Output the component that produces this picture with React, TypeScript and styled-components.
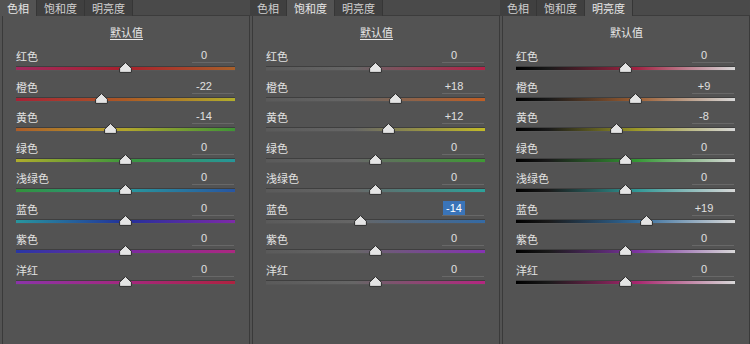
import React from 'react';
import styled, { createGlobalStyle } from 'styled-components';

const GlobalStyle = createGlobalStyle`
  html, body {
    margin: 0;
    padding: 0;
    background: #535353;
  }
  body {
    font-family: "Noto Sans CJK SC", "Noto Sans", sans-serif;
    color: #dcdcdc;
  }
`;

const TAB_NAMES = ['色相', '饱和度', '明亮度'];
const COLOR_NAMES = ['红色', '橙色', '黄色', '绿色', '浅绿色', '蓝色', '紫色', '洋红'];

// gradient stops for each colour row, per panel kind
const HUE_TRACKS = [
  'linear-gradient(90deg, #a02a5e 0%, #a8202c 50%, #a8602a 100%)',
  'linear-gradient(90deg, #a62236 0%, #ac5a24 50%, #b2ae2c 100%)',
  'linear-gradient(90deg, #ac5c28 0%, #b2a62c 50%, #3e9436 100%)',
  'linear-gradient(90deg, #aeac2c 0%, #3c963c 50%, #26969a 100%)',
  'linear-gradient(90deg, #32923a 0%, #28989c 50%, #2856a2 100%)',
  'linear-gradient(90deg, #28969e 0%, #22309a 50%, #7e2aa8 100%)',
  'linear-gradient(90deg, #2836a4 0%, #7a2aa0 50%, #ac2880 100%)',
  'linear-gradient(90deg, #8a34a8 0%, #a4287e 50%, #ae2240 100%)',
];

const SAT_COLORS = ['#b42248', '#c05e24', '#c2ba28', '#3e9a34', '#2ca29a', '#346aa4', '#8632b4', '#b42680'];
const LUM_COLORS = ['#a22242', '#9c5e32', '#9c9828', '#349834', '#309896', '#306a9c', '#7c34a0', '#a8266e'];

const satTrack = (c: string) => `linear-gradient(90deg, #5a5a5a 0%, #666 40%, ${c} 100%)`;
const lumTrack = (c: string) => `linear-gradient(90deg, #000 0%, #1a1a1a 15%, ${c} 55%, #d8d8d8 100%)`;

interface RowData {
  name: string;
  value: number;
  track: string;
  selected?: boolean;
}

interface PanelData {
  active: number;
  underline: boolean;
  rows: RowData[];
}

const fmt = (v: number) => (v > 0 ? `+${v}` : `${v}`);

const PANELS: PanelData[] = [
  {
    active: 0,
    underline: true,
    rows: [0, -22, -14, 0, 0, 0, 0, 0].map((v, i) => ({ name: COLOR_NAMES[i], value: v, track: HUE_TRACKS[i] })),
  },
  {
    active: 1,
    underline: true,
    rows: [0, 18, 12, 0, 0, -14, 0, 0].map((v, i) => ({
      name: COLOR_NAMES[i],
      value: v,
      track: satTrack(SAT_COLORS[i]),
      selected: i === 5,
    })),
  },
  {
    active: 2,
    underline: false,
    rows: [0, 9, -8, 0, 0, 19, 0, 0].map((v, i) => ({ name: COLOR_NAMES[i], value: v, track: lumTrack(LUM_COLORS[i]) })),
  },
];

const Screen = styled.div`
  display: grid;
  grid-template-columns: repeat(3, 250px);
  width: 750px;
  height: 344px;
  overflow: hidden;
  background: #535353;
`;

const Panel = styled.div`
  display: flex;
  flex-direction: column;
  height: 344px;
`;

const TabStrip = styled.div`
  display: flex;
  height: 16px;
  background: #4a4a4a;
  box-shadow: inset 0 -1px 0 #3c3c3c;
`;

const Tab = styled.div<{ $active: boolean }>`
  height: 16px;
  padding: 0 7px;
  font-size: 11px;
  line-height: 16px;
  color: ${p => (p.$active ? '#e6e6e6' : '#cfcfcf')};
  background: ${p => (p.$active ? '#535353' : '#404040')};
  border-right: 1px solid #363636;
  box-sizing: border-box;
`;

const Body = styled.div`
  flex: 1;
  margin-left: 2px;
  border-left: 1px solid #3a3a3a;
  border-right: 1px solid #3a3a3a;
  padding: 9px 12px 0 13px;
`;

const DefaultLink = styled.div<{ $underline: boolean }>`
  text-align: center;
  font-size: 11px;
  line-height: 14px;
  height: 14px;
  color: #e8e8e8;
  text-decoration: ${p => (p.$underline ? 'underline' : 'none')};
  text-underline-offset: 2px;
  margin-bottom: 8px;
`;

const Rows = styled.div`
  display: grid;
  grid-auto-rows: 30.57px;
`;

const Row = styled.div`
  display: flex;
  flex-direction: column;
  width: 219px;
`;

const RowHead = styled.div`
  display: flex;
  justify-content: space-between;
  align-items: flex-end;
  height: 16px;
`;

const Label = styled.span`
  font-size: 11px;
  line-height: 14px;
  color: #e2e2e2;
`;

const ValueField = styled.div`
  width: 42px;
  height: 15px;
  margin-right: 1px;
  box-sizing: border-box;
  border-bottom: 1px solid #686868;
  display: flex;
`;

const ValueText = styled.span<{ $selected?: boolean }>`
  width: 20px;
  margin-left: 1px;
  padding: 0 1px;
  text-align: center;
  font-family: "Liberation Sans", Arial, sans-serif;
  font-size: 11px;
  line-height: 14px;
  color: ${p => (p.$selected ? '#ffffff' : '#e0e0e0')};
  background: ${p => (p.$selected ? '#3a74b8' : 'transparent')};
`;

const Track = styled.div<{ $bg: string }>`
  position: relative;
  height: 3px;
  margin-top: 4px;
  background: ${p => p.$bg};
  box-shadow: 0 -1px 0 rgba(40, 40, 40, 0.45), 0 1px 0 rgba(90, 90, 90, 0.6);
`;

const Thumb = styled.svg`
  position: absolute;
  top: -5px;
  width: 13px;
  height: 11px;
  margin-left: -6.5px;
`;

function Slider({ value, track }: { value: number; track: string }) {
  const pct = 50 + value / 2;
  return (
    <Track $bg={track}>
      <Thumb viewBox="0 0 13 11" style={{ left: `${pct}%` }}>
        <path d="M6.5 0.6 L12.4 6.2 L12.4 10.4 L0.6 10.4 L0.6 6.2 Z" fill="#e4e4e4" stroke="#2c2c2c" strokeWidth="1" strokeLinejoin="round" />
      </Thumb>
    </Track>
  );
}

function AdjustPanel({ panel }: { panel: PanelData }) {
  return (
    <Panel>
      <TabStrip>
        {TAB_NAMES.map((t, i) => (
          <Tab key={t} $active={i === panel.active}>
            {t}
          </Tab>
        ))}
      </TabStrip>
      <Body>
        <DefaultLink $underline={panel.underline}>默认值</DefaultLink>
        <Rows>
          {panel.rows.map(r => (
            <Row key={r.name}>
              <RowHead>
                <Label>{r.name}</Label>
                <ValueField>
                  <ValueText $selected={r.selected}>{fmt(r.value)}</ValueText>
                </ValueField>
              </RowHead>
              <Slider value={r.value} track={r.track} />
            </Row>
          ))}
        </Rows>
      </Body>
    </Panel>
  );
}

export default function App() {
  return (
    <>
      <GlobalStyle />
      <Screen>
        {PANELS.map((p, i) => (
          <AdjustPanel key={i} panel={p} />
        ))}
      </Screen>
    </>
  );
}
